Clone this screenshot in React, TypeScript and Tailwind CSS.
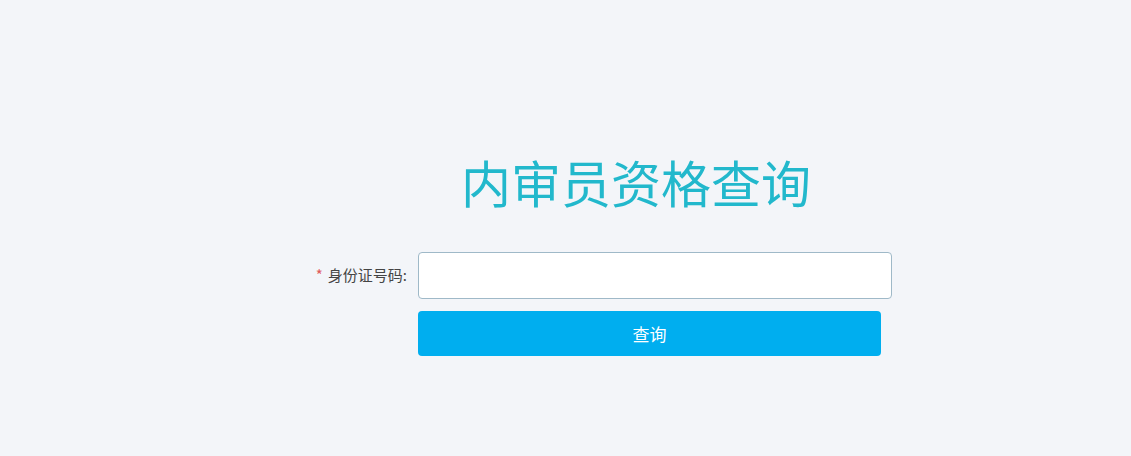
import React, { useState } from "react";

const App = () => {
	const [idCard, setIdCard] = useState("");

	return (
		<div
			className="min-h-screen w-full bg-[#f3f5f9]"
			style={{ fontFamily: '"Noto Sans CJK SC", "Noto Sans", sans-serif' }}
		>
			<div className="ml-[300px] w-[672px] pt-[154px]">
				{/* Title */}
				<h1 className="text-center text-[50px] leading-[54px] font-normal text-[#22b8cc]">
					内审员资格查询
				</h1>

				{/* Form */}
				<div className="mt-[44px] flex items-center">
					<label className="w-[118px] pr-[11px] text-right text-[15px] text-[#444444]">
						<span className="mr-[5px] text-[#e05a5a]">*</span>
						身份证号码:
					</label>
					<input
						value={idCard}
						onChange={(e) => setIdCard(e.target.value)}
						className="h-[47px] w-[474px] rounded-[4px] border border-[#9fb9c8] bg-white px-3 text-[14px] outline-none"
					/>
				</div>
				<div className="mt-[12px] flex">
					<div className="w-[118px]" />
					<button className="h-[45px] w-[463px] rounded-[4px] bg-[#00aeef] text-[17px] text-white">
						查询
					</button>
				</div>
			</div>
		</div>
	);
};

export default App;
